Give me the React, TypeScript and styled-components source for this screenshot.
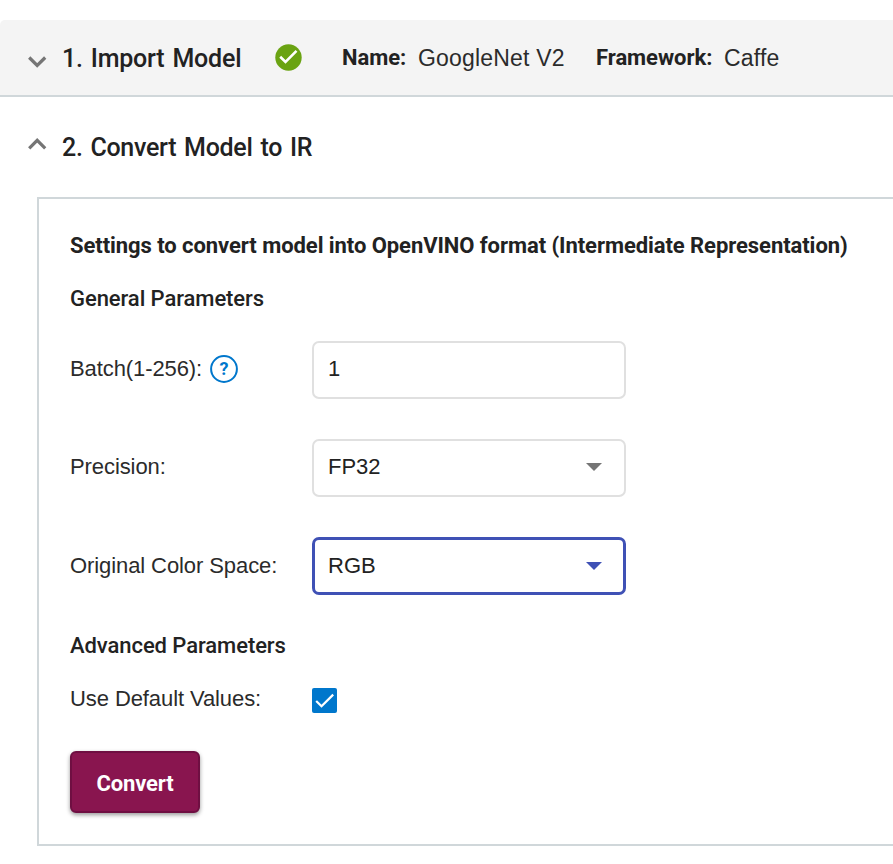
import React from 'react';
import styled, { createGlobalStyle } from 'styled-components';

const Global = createGlobalStyle`
  *{box-sizing:border-box}
  body{margin:0;background:#fff;color:#222;overflow:hidden;font-family:Roboto,sans-serif}
`;
const Page = styled.main`width:893px;height:864px;padding-top:20px;overflow:hidden;`;
const StepBar = styled.header`
  height:77px;background:#f4f4f4;border-bottom:2px solid #d0d7da;border-top-left-radius:5px;
  display:flex;align-items:center;padding-left:28px;
`;
const StepTitle = styled.h2<{ $tracking: number }>`
  margin:0 0 0 15px;padding-top:2px;font-size:25px;line-height:32px;font-weight:500;
  white-space:nowrap;letter-spacing:${p => p.$tracking}px;word-spacing:2px;
`;
const StepCheck = styled.svg`margin:0 40px 0 auto;flex:none;`;
const StepLead = styled.div`width:314px;display:flex;align-items:center;flex:none;`;
const Meta = styled.span<{ $width: number }>`
  width:${p => p.$width}px;flex:none;display:flex;font:400 23px/30px "Liberation Sans",sans-serif;
  letter-spacing:.18px;color:#2b2b2b;white-space:nowrap;
`;
const MetaName = styled.b<{ $width: number }>`
  width:${p => p.$width}px;flex:none;color:#222;font-family:Roboto,sans-serif;font-size:22px;font-weight:700;letter-spacing:-.05px;
`;
const OpenStep = styled.div`height:100px;display:flex;align-items:center;padding-left:28px;`;
const Panel = styled.section`
  margin-left:37px;width:900px;height:649px;border:2px solid #d0d7da;padding:32px 31px 0;
`;
const Heading = styled.h3<{ $gap: number; $strong?: boolean }>`
  margin:0 0 ${p => p.$gap}px;font-size:22px;line-height:30px;white-space:nowrap;
  font-weight:${p => p.$strong ? 700 : 500};letter-spacing:${p => p.$strong ? '-.065px' : '-.07px'};
`;
const Row = styled.div<{ $gap: number; $height: number }>`
  display:flex;height:${p => p.$height}px;margin-bottom:${p => p.$gap}px;align-items:center;
`;
const Label = styled.label<{ $lift?: number }>`
  width:242px;padding-bottom:${p => p.$lift ?? 2}px;display:flex;align-items:center;gap:8px;
  font:400 22px/28px "Liberation Sans",sans-serif;letter-spacing:-.09px;color:#2b2b2b;white-space:nowrap;
`;
const Field = styled.div<{ $active?: boolean }>`
  width:314px;height:58px;border-radius:7px;border:${p => p.$active ? '3px solid #3f51b5' : '2px solid #e0e0e0'};
  padding:0 ${p => p.$active ? 21 : 22}px ${p => p.$active ? 1 : 3}px ${p => p.$active ? 13 : 14}px;
  display:flex;align-items:center;justify-content:space-between;
  font:400 22px/28px "Liberation Sans",sans-serif;
`;
const Button = styled.button`
  display:block;width:130px;height:62px;border:2px solid #6f0f42;border-radius:6px;background:#89154f;color:#fff;
  font:700 22px Roboto,sans-serif;letter-spacing:-.15px;box-shadow:0 2px 4px #0006;padding:2px 0 0;
`;
const ChevronIcon = styled.svg<{ $up?: boolean }>`
  flex:none;margin-top:${p => p.$up ? -6 : 8}px;
`;

const Chevron = ({ up }: { up?: boolean }) => (
  <ChevronIcon $up={up} width="19" height="12" viewBox="0 0 19 12" fill="none" stroke="#757575" strokeWidth="3.2">
    <path d={up ? 'M1.2 10.3 9.2 2.3 17.2 10.3' : 'M1.2 1.5 9.2 9.5 17.2 1.5'} />
  </ChevronIcon>
);
const Arrow = ({ color }: { color: string }) => (
  <svg width="16" height="8" viewBox="0 0 16 8"><path d="M0 0H16L8 8Z" fill={color} /></svg>
);

export default function App() {
  return (
    <Page>
      <Global />
      <StepBar>
        <StepLead>
          <Chevron />
          <StepTitle $tracking={-0.2}>1. Import Model</StepTitle>
          <StepCheck width="27" height="27" viewBox="0 0 27 27">
            <circle cx="13.5" cy="13.5" r="13.2" fill="#6aa312" />
            <path d="m5.2 12.8 5.3 5.2L21.5 6.8" fill="none" stroke="#fff" strokeWidth="2.6" />
          </StepCheck>
        </StepLead>
        <Meta $width={254}><MetaName $width={76}>Name:</MetaName>GoogleNet V2</Meta>
        <Meta $width={200}><MetaName $width={128}>Framework:</MetaName>Caffe</Meta>
      </StepBar>
      <OpenStep><Chevron up /><StepTitle $tracking={-0.3}>2. Convert Model to IR</StepTitle></OpenStep>
      <Panel>
        <Heading $gap={23} $strong>Settings to convert model into OpenVINO format (Intermediate Representation)</Heading>
        <Heading $gap={27}>General Parameters</Heading>
        <Row $height={58} $gap={40}>
          <Label>Batch(1-256):
            <svg width="28" height="28" viewBox="0 0 28 28">
              <circle cx="14" cy="14" r="12.9" fill="none" stroke="#0077cc" strokeWidth="2" />
              <text x="14" y="20" textAnchor="middle" fontFamily="Roboto" fontWeight="700" fontSize="18" fill="#0077cc">?</text>
            </svg>
          </Label>
          <Field>1</Field>
        </Row>
        <Row $height={58} $gap={40}><Label>Precision:</Label><Field>FP32<Arrow color="#757575" /></Field></Row>
        <Row $height={58} $gap={36}><Label $lift={0}>Original Color Space:</Label><Field $active>RGB<Arrow color="#3f51b5" /></Field></Row>
        <Heading $gap={26}>Advanced Parameters</Heading>
        <Row $height={26} $gap={38}>
          <Label $lift={3}>Use Default Values:</Label>
          <svg width="25" height="25" viewBox="0 0 25 25">
            <rect width="25" height="25" rx="2" fill="#0077cc" />
            <path d="m4.2 13 5.3 5.3L21.2 6.6" fill="none" stroke="#fff" strokeWidth="2.2" />
          </svg>
        </Row>
        <Button>Convert</Button>
      </Panel>
    </Page>
  );
}
